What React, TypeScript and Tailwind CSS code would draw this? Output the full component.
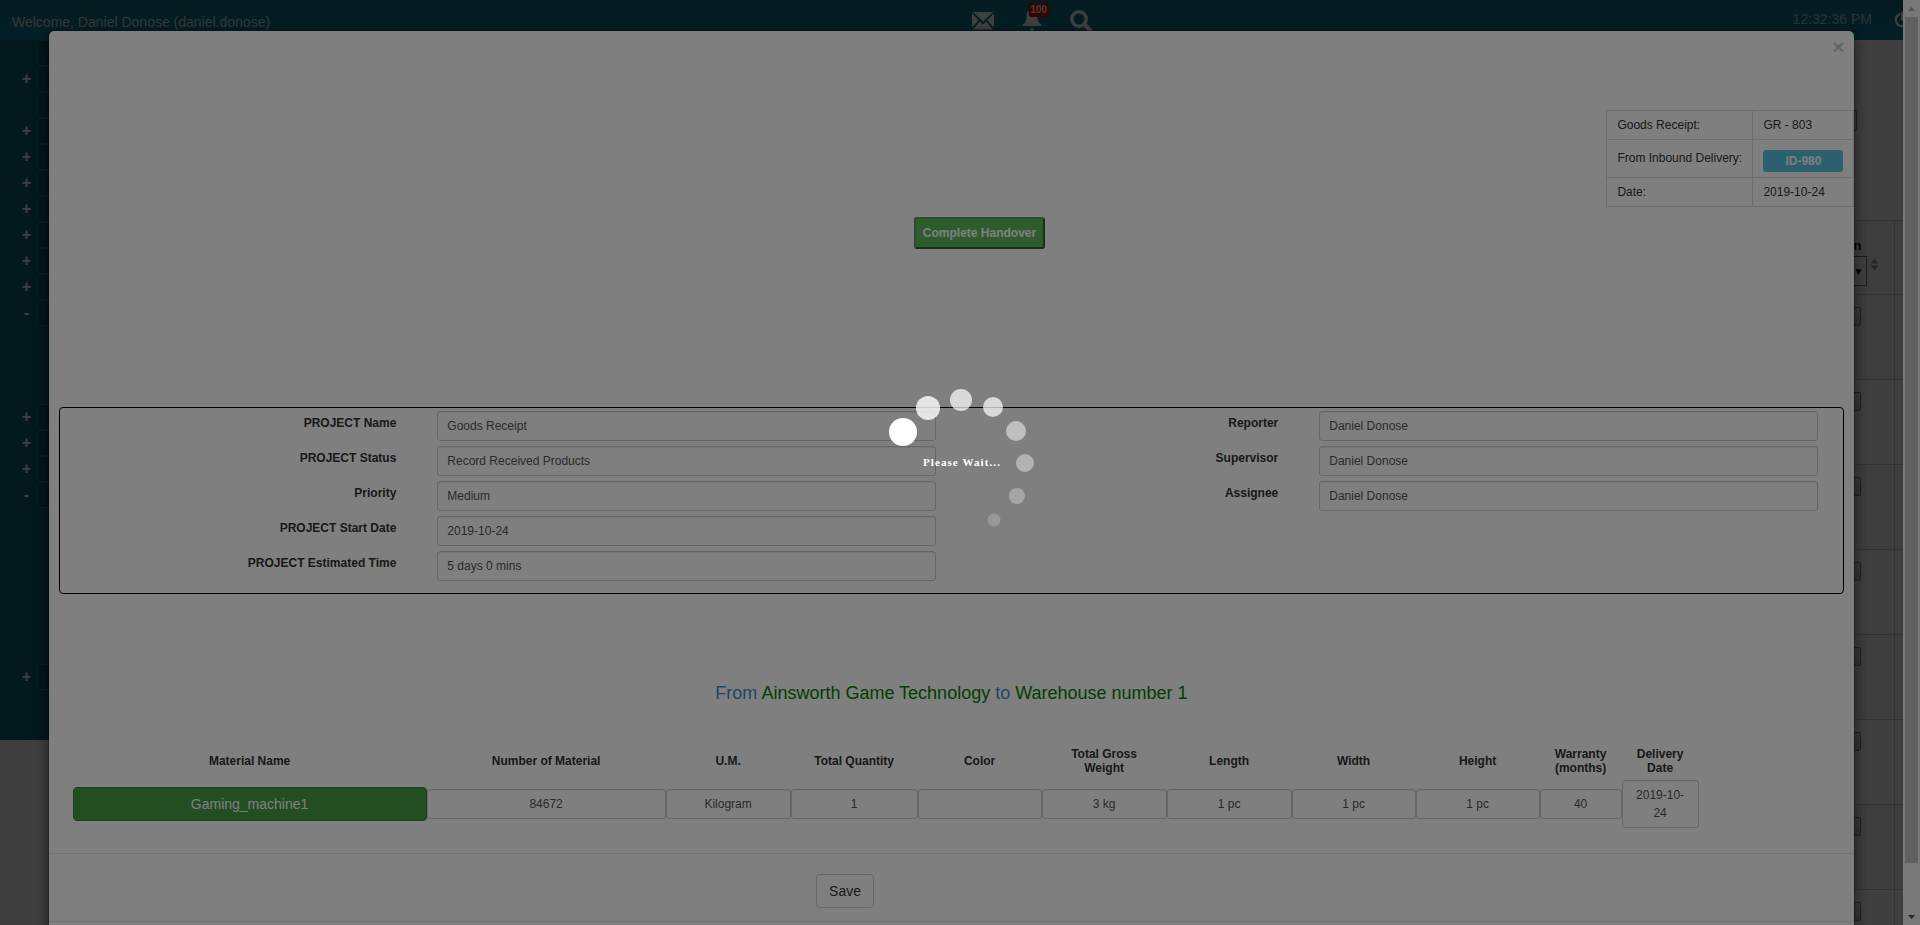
import React from "react";

const menu = ["", "+", "", "+", "+", "+", "+", "+", "+", "+", "-", null, null, null, "+", "+", "+", "-", null, null, null, null, null, null, "+"];

const leftFields = [
  ["PROJECT Name", "Goods Receipt"],
  ["PROJECT Status", "Record Received Products"],
  ["Priority", "Medium"],
  ["PROJECT Start Date", "2019-10-24"],
  ["PROJECT Estimated Time", "5 days 0 mins"],
];
const rightFields = [
  ["Reporter", "Daniel Donose"],
  ["Supervisor", "Daniel Donose"],
  ["Assignee", "Daniel Donose"],
];

const columns = [
  { title: "Material Name", value: "Gaming_machine1", width: "w-[354px]" },
  { title: "Number of Material", value: "84672", width: "w-[239px]" },
  { title: "U.M.", value: "Kilogram", width: "w-[125px]" },
  { title: "Total Quantity", value: "1", width: "w-[127px]" },
  { title: "Color", value: "", width: "w-[124px]" },
  { title: "Total Gross Weight", value: "3 kg", width: "w-[125px]" },
  { title: "Length", value: "1 pc", width: "w-[125px]" },
  { title: "Width", value: "1 pc", width: "w-[124px]" },
  { title: "Height", value: "1 pc", width: "w-[124px]" },
  { title: "Warranty (months)", value: "40", width: "w-[82px]" },
  { title: "Delivery Date", value: "2019-10-24", width: "w-[77px]" },
];

const dots = [
  [18, 44, 14, 1],
  [43, 20, 12, 0.8],
  [76, 12, 11, 0.7],
  [108, 19, 10, 0.7],
  [131, 43, 10, 0.5],
  [140, 75, 9, 0.4],
  [132, 108, 8, 0.3],
  [109, 132, 6.5, 0.2],
];

function Fields({ fields }: { fields: string[][] }) {
  return (
    <div className="flex flex-col gap-[5px]">
      {fields.map(([label, value]) => (
        <div key={label} className="flex">
          <label htmlFor={label} className="w-2/5 pt-1 pr-[26px] text-right text-xs font-bold text-[#333]">
            {label}
          </label>
          <div className="w-3/5 px-[15px]">
            <input
              id={label}
              readOnly
              defaultValue={value}
              className="block h-[30px] w-full rounded-[3px] border border-[#ccc] bg-white px-[9px] text-xs text-[#555] shadow-[inset_0_1px_1px_rgba(0,0,0,0.075)]"
            />
          </div>
        </div>
      ))}
    </div>
  );
}

function TopBar() {
  return (
    <header className="flex h-10 items-start bg-linear-to-b from-[#107084] to-[#0d8098] pl-3 text-[#ddd]">
      <span className="w-1/2 pt-3 text-sm leading-5">Welcome, Daniel Donose (daniel.donose)</span>
      <div className="ml-[14px] flex gap-[27px] pt-2 text-white">
        <button aria-label="Messages" className="flex">
          <svg width="22" height="26" viewBox="0 0 22 26" fill="currentColor">
            <path d="M.8 4h20.4L11 13.6zM0 5.2l6.7 7L0 19.4zM22 5.2v14.2l-6.7-7.2zM7.8 13.4l3.2 3 3.2-3 6.6 8.1H1.2z" />
          </svg>
        </button>
        <button aria-label="Notifications" className="relative flex">
          <svg width="22" height="26" viewBox="0 0 22 26" fill="currentColor">
            <path d="M11 .5c1 0 1.4.6 1.4 1.5 2.600.7 4 3 4 5.500 0 5 .8 7 4.100 9 .3 1-.5 1.500-2 1.500h-15c-1.500 0-2.300-.5-2-1.500 3.300-2 4.100-4 4.100-9C5.600 5 7 2.700 9.600 2c0-.9.4-1.500 1.400-1.500zM8.500 20.500h5c-.3 1.500-1.200 2.300-2.500 2.300S8.800 22 8.500 20.500z" />
          </svg>
          <span className="absolute -top-[5px] left-[8px] rounded-[2px] bg-[#f00000] px-[2px] text-[10px] leading-[14px] font-bold">100</span>
        </button>
        <button aria-label="Search" className="flex">
          <svg width="22" height="26" viewBox="0 0 22 26" fill="none" stroke="currentColor">
            <circle cx="9" cy="11" r="7.200" strokeWidth="3.400" />
            <path d="M14.500 16.500l5.200 5.200" strokeWidth="4.400" strokeLinecap="round" />
          </svg>
        </button>
      </div>
      <div className="flex flex-1 justify-end gap-[22px] overflow-hidden pt-[9px]">
        <span className="text-sm leading-5 text-[#a8d0dc]">12:32:36 PM</span>
        <button aria-label="Log out" className="-mr-[7px] mt-[3px] block size-4 text-white">
          <svg width="16" height="16" viewBox="0 0 16 16" fill="none" stroke="currentColor" strokeWidth="2.200" strokeLinecap="round">
            <path d="M5 2.500a6.200 6.200 0 1 0 6 0M8 1v6.500" />
          </svg>
        </button>
      </div>
    </header>
  );
}

function BackgroundPage() {
  return (
    <div className="absolute inset-0 overflow-hidden bg-white">
      <TopBar />
      <div className="flex items-start">
        <nav className="w-60 bg-[#0c6476] pb-[50px]">
          {menu.map((sign, i) => (
            <div key={i} className="flex h-[26px] items-center">
              <span className="w-[37px] pl-4 text-center text-base leading-5 font-bold text-white">{sign}</span>
              {sign !== null && <span className="h-[26px] flex-1 rounded-[4px] border border-[#128c84] bg-[#0a5666]" />}
            </div>
          ))}
        </nav>
        <div className="flex-1 pt-[70px]">
          <div className="flex justify-end pr-[46px]">
            <button aria-label="Options" className="h-[21px] w-20 rounded-[2px] border border-[#888] bg-[#eee]" />
          </div>
          <table className="mt-[89px] w-full border-collapse bg-[#f8f8f8] text-[13px]">
            <thead>
              <tr className="h-[74px]">
                <th className="border border-[#ccc] pr-[15px] align-bottom">
                  <div className="pr-[17px] pb-[2px] text-right leading-4 text-black">Description</div>
                  <div className="mb-2 flex items-center justify-end gap-[3px]">
                    <select aria-label="Filter" className="h-[30px] w-40 appearance-none border border-[#777] bg-white" />
                    <span className="-ml-[19px] w-4 text-[10px] text-black">▼</span>
                    <svg width="9" height="12" viewBox="0 0 9 12" fill="#999" className="mb-3">
                      <path d="M4.500 0L8.500 4.500h-8zM4.500 11L.5 6.500h8z" />
                    </svg>
                  </div>
                </th>
                <th className="w-[9px] border-y border-[#ccc]" />
              </tr>
            </thead>
            <tbody>
              {[0, 1, 2, 3, 4, 5, 6, 7].map((row) => (
                <tr key={row} className="h-[85px] even:bg-white">
                  <td className="border border-[#ccc] pt-3 pr-[33px] align-top">
                    <button aria-label="Open row" className="ml-auto block h-[19px] w-20 rounded-[2px] border border-[#888] bg-linear-to-b from-[#eee] to-[#ccc]" />
                  </td>
                  <td className="border-y border-[#ccc]" />
                </tr>
              ))}
            </tbody>
          </table>
        </div>
      </div>
    </div>
  );
}

function Modal() {
  return (
    <div role="dialog" aria-label="Goods Receipt" className="relative mx-auto mt-[30px] w-[95%] rounded-md border border-black/20 bg-white bg-clip-padding pb-10 shadow-[0_5px_15px_rgba(0,0,0,0.5)]">
      <div className="flex h-[79px] items-start justify-end pr-[10px] pt-[5px]">
        <button aria-label="Close" className="text-[21px] leading-[21px] font-bold text-[#ccc]">×</button>
      </div>

      <div className="flex justify-end">
        <table className="border-collapse text-xs leading-[18px] text-[#333] [&_td]:border [&_td]:border-[#ddd] [&_td]:px-[10px] [&_td]:align-top">
          <tbody>
            <tr>
              <td className="w-[146px] py-[5px]">Goods Receipt:</td>
              <td className="py-[5px]">GR - 803</td>
            </tr>
            <tr>
              <td className="py-[9px]">From Inbound Delivery:</td>
              <td className="pt-[10px] pb-[5px]">
                <a href="#delivery" className="block w-20 rounded-[3px] bg-[#5bc0de] text-center leading-[22px] font-bold text-white">ID-980</a>
              </td>
            </tr>
            <tr>
              <td className="py-[5px]">Date:</td>
              <td className="py-[5px]">2019-10-24</td>
            </tr>
          </tbody>
        </table>
      </div>

      <div className="mt-[10px] flex justify-center pl-14">
        <button className="h-8 rounded-[3px] border-2 border-t-[#50a050] border-r-[#2c622c] border-b-[#2c622c] border-l-[#50a050] bg-[#5cb85c] px-[7px] text-xs font-bold text-white">
          Complete Handover
        </button>
      </div>

      <section className="mx-[10px] mt-[158px] grid grid-cols-2 rounded border border-black px-[10px] pt-[3px] pb-3">
        <Fields fields={leftFields} />
        <Fields fields={rightFields} />
      </section>

      <h2 className="mt-[89px] text-center text-lg leading-5 text-[#428bca]">
        From <span className="text-[#008000]">Ainsworth Game Technology</span> to <span className="text-[#008000]">Warehouse number 1</span>
      </h2>

      <table className="mt-[44px] ml-6 w-[90%] table-fixed border-collapse text-center text-xs">
        <thead>
          <tr>
            {columns.map((c) => (
              <th key={c.title} className={`${c.width} px-3 pb-[5px] leading-[14px] font-bold text-[#333]`}>{c.title}</th>
            ))}
          </tr>
        </thead>
        <tbody>
          <tr>
            {columns.map((c, i) => (
              <td key={c.title} className="p-0">
                {i === 0 ? (
                  <button className="block h-[34px] w-full rounded border border-[#398439] bg-[#449d44] text-sm text-white">{c.value}</button>
                ) : (
                  <div className="min-h-[30px] rounded-[3px] border border-[#ccc] px-[10px] py-[5px] leading-[18px] text-[#555] shadow-[inset_0_1px_1px_rgba(0,0,0,0.075)]">
                    {c.value}
                  </div>
                )}
              </td>
            ))}
          </tr>
        </tbody>
      </table>

      <footer className="mt-[25px] border-y border-[#e5e5e5] pt-5 pb-[13px]">
        <button className="ml-[42.5%] block h-[34px] rounded border border-[#ccc] bg-white px-3 text-sm text-[#333]">Save</button>
      </footer>
    </div>
  );
}

export default function App() {
  return (
    <div className="relative flex h-screen overflow-hidden font-['Liberation_Sans',Arial,sans-serif]">
      <div className="relative flex-1 overflow-hidden">
        <BackgroundPage />
        <div className="absolute inset-0 overflow-hidden bg-black/50">
          <Modal />
        </div>
      </div>

      <div aria-hidden="true" className="flex w-[17px] flex-col items-center bg-[#f1f1f1]">
        <svg width="17" height="17" viewBox="0 0 17 17" fill="#a3a3a3"><path d="M8.500 7L12 11H5z" /></svg>
        <div className="h-[846px] max-h-[92%] w-[13px] bg-[#c1c1c1]" />
        <svg className="mt-auto" width="17" height="17" viewBox="0 0 17 17" fill="#505050"><path d="M8.500 11L12 7H5z" /></svg>
      </div>

      <div role="status" className="absolute inset-0 flex items-center justify-center bg-black/50">
        <div className="relative flex size-[150px] items-center justify-center">
          <svg className="absolute inset-0" width="150" height="150" viewBox="0 0 150 150" fill="#fff">
            {dots.map(([cx, cy, r, opacity]) => (
              <circle key={`${cx}-${cy}`} cx={cx} cy={cy} r={r} opacity={opacity} />
            ))}
          </svg>
          <span className="relative pl-1 font-['Liberation_Serif',serif] text-[11px] font-bold tracking-widest whitespace-nowrap text-white">Please Wait...</span>
        </div>
      </div>
    </div>
  );
}
